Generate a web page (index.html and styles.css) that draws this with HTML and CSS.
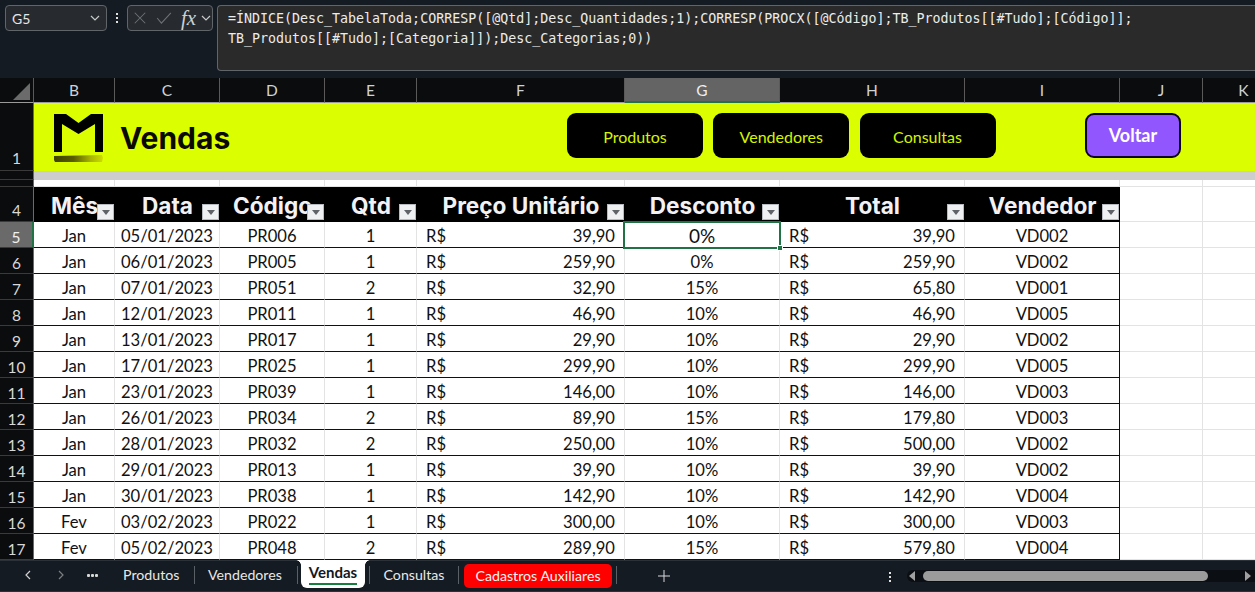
FILE: index.html
```html
<!DOCTYPE html>
<html lang="pt-BR">
<head>
<meta charset="utf-8">
<title>Vendas</title>
<link rel="stylesheet" href="styles.css">
</head>
<body>
<div class="app">
  <header class="fbar">
    <div class="namebox"><span>G5</span><svg class="chev" viewBox="0 0 10 6"><path d="M1 1l4 4 4-4"/></svg></div>
    <div class="vdots"><i></i><i></i><i></i></div>
    <div class="fxbox">
      <svg class="ic-x" viewBox="0 0 16 16"><path d="M2 2l12 12M14 2L2 14"/></svg>
      <svg class="ic-v" viewBox="0 0 18 14"><path d="M1 7l5 6L17 1"/></svg>
      <span class="fx">fx</span>
      <svg class="chev" viewBox="0 0 10 6"><path d="M1 1l4 4 4-4"/></svg>
    </div>
    <div class="formula">=ÍNDICE(Desc_TabelaToda;CORRESP([@Qtd];Desc_Quantidades;1);CORRESP(PROCX([@Código];TB_Produtos[[#Tudo];[Código]];<br>TB_Produtos[[#Tudo];[Categoria]]);Desc_Categorias;0))</div>
  </header>
  <div class="sheet">
    <table class="grid">
      <colgroup>
        <col class="c-h"><col class="c-b"><col class="c-c"><col class="c-d"><col class="c-e"><col class="c-f"><col class="c-g"><col class="c-h2"><col class="c-i"><col class="c-j"><col class="c-k">
      </colgroup>
      <thead>
        <tr class="r-head">
          <th class="corner"><svg viewBox="0 0 18 18"><path d="M18 0v18H0z"/></svg></th>
          <th>B</th><th>C</th><th>D</th><th>E</th><th>F</th><th class="active">G</th><th>H</th><th>I</th><th>J</th><th>K</th>
        </tr>
      </thead>
      <tbody>
        <tr class="r-banner">
          <th class="rn">1</th>
          <td colspan="10" class="banner">
            <div class="banner-in">
              <svg class="logo" viewBox="0 0 50 48">
                <defs><linearGradient id="brush" x1="0" x2="1" y1="0" y2="0"><stop offset="0" stop-color="#3f4200"/><stop offset=".4" stop-color="#5a5e00"/><stop offset=".75" stop-color="#a8b500"/><stop offset="1" stop-color="#cfdf00"/></linearGradient></defs>
                <path d="M0 0h12l12.500 9L37 0h12v38h-8V10L24.500 20 8 10v28H0z"/>
                <path d="M0 42l48-1 1 3-1 4-47 0-1-2z" fill="url(#brush)"/>
              </svg>
              <h1 class="title">Vendas</h1>
              <div class="navs">
                <a class="nav">Produtos</a><a class="nav">Vendedores</a><a class="nav">Consultas</a>
              </div>
              <a class="back">Voltar</a>
            </div>
          </td>
        </tr>
        <tr class="r-2"><th class="rn"></th><td colspan="10" class="greyband"></td></tr>
        <tr class="r-3"><th class="rn"></th><td></td><td></td><td></td><td></td><td></td><td></td><td></td><td></td><td></td><td></td></tr>
        <tr class="r-4">
          <th class="rn">4</th>
          <td class="hd hd-b"><span>Mês</span><b class="flt"></b></td>
          <td class="hd hd-c"><span>Data</span><b class="flt"></b></td>
          <td class="hd hd-d"><span>Código</span><b class="flt"></b></td>
          <td class="hd hd-e"><span>Qtd</span><b class="flt"></b></td>
          <td class="hd hd-f"><span>Preço Unitário</span><b class="flt"></b></td>
          <td class="hd hd-g"><span>Desconto</span><b class="flt"></b></td>
          <td class="hd hd-h"><span>Total</span><b class="flt"></b></td>
          <td class="hd hd-i"><span>Vendedor</span><b class="flt"></b></td>
          <td></td><td></td>
        </tr>
        <tr class="sel"><th class="rn">5</th><td>Jan</td><td>05/01/2023</td><td>PR006</td><td>1</td><td class="cur"><span>R$</span><span>39,90</span></td><td class="pick"><span>0%</span><i class="handle"></i></td><td class="cur"><span>R$</span><span>39,90</span></td><td class="last">VD002</td><td></td><td></td></tr>
        <tr><th class="rn">6</th><td>Jan</td><td>06/01/2023</td><td>PR005</td><td>1</td><td class="cur"><span>R$</span><span>259,90</span></td><td>0%</td><td class="cur"><span>R$</span><span>259,90</span></td><td class="last">VD002</td><td></td><td></td></tr>
        <tr><th class="rn">7</th><td>Jan</td><td>07/01/2023</td><td>PR051</td><td>2</td><td class="cur"><span>R$</span><span>32,90</span></td><td>15%</td><td class="cur"><span>R$</span><span>65,80</span></td><td class="last">VD001</td><td></td><td></td></tr>
        <tr><th class="rn">8</th><td>Jan</td><td>12/01/2023</td><td>PR011</td><td>1</td><td class="cur"><span>R$</span><span>46,90</span></td><td>10%</td><td class="cur"><span>R$</span><span>46,90</span></td><td class="last">VD005</td><td></td><td></td></tr>
        <tr><th class="rn">9</th><td>Jan</td><td>13/01/2023</td><td>PR017</td><td>1</td><td class="cur"><span>R$</span><span>29,90</span></td><td>10%</td><td class="cur"><span>R$</span><span>29,90</span></td><td class="last">VD002</td><td></td><td></td></tr>
        <tr><th class="rn">10</th><td>Jan</td><td>17/01/2023</td><td>PR025</td><td>1</td><td class="cur"><span>R$</span><span>299,90</span></td><td>10%</td><td class="cur"><span>R$</span><span>299,90</span></td><td class="last">VD005</td><td></td><td></td></tr>
        <tr><th class="rn">11</th><td>Jan</td><td>23/01/2023</td><td>PR039</td><td>1</td><td class="cur"><span>R$</span><span>146,00</span></td><td>10%</td><td class="cur"><span>R$</span><span>146,00</span></td><td class="last">VD003</td><td></td><td></td></tr>
        <tr><th class="rn">12</th><td>Jan</td><td>26/01/2023</td><td>PR034</td><td>2</td><td class="cur"><span>R$</span><span>89,90</span></td><td>15%</td><td class="cur"><span>R$</span><span>179,80</span></td><td class="last">VD003</td><td></td><td></td></tr>
        <tr><th class="rn">13</th><td>Jan</td><td>28/01/2023</td><td>PR032</td><td>2</td><td class="cur"><span>R$</span><span>250,00</span></td><td>10%</td><td class="cur"><span>R$</span><span>500,00</span></td><td class="last">VD002</td><td></td><td></td></tr>
        <tr><th class="rn">14</th><td>Jan</td><td>29/01/2023</td><td>PR013</td><td>1</td><td class="cur"><span>R$</span><span>39,90</span></td><td>10%</td><td class="cur"><span>R$</span><span>39,90</span></td><td class="last">VD002</td><td></td><td></td></tr>
        <tr><th class="rn">15</th><td>Jan</td><td>30/01/2023</td><td>PR038</td><td>1</td><td class="cur"><span>R$</span><span>142,90</span></td><td>10%</td><td class="cur"><span>R$</span><span>142,90</span></td><td class="last">VD004</td><td></td><td></td></tr>
        <tr><th class="rn">16</th><td>Fev</td><td>03/02/2023</td><td>PR022</td><td>1</td><td class="cur"><span>R$</span><span>300,00</span></td><td>10%</td><td class="cur"><span>R$</span><span>300,00</span></td><td class="last">VD003</td><td></td><td></td></tr>
        <tr><th class="rn">17</th><td>Fev</td><td>05/02/2023</td><td>PR048</td><td>2</td><td class="cur"><span>R$</span><span>289,90</span></td><td>15%</td><td class="cur"><span>R$</span><span>579,80</span></td><td class="last">VD004</td><td></td><td></td></tr>
      </tbody>
    </table>
  </div>
  <footer class="tabs">
    <svg class="nav-ic" viewBox="0 0 6 10"><path d="M5 1L1 5l4 4"/></svg>
    <svg class="nav-ic dim" viewBox="0 0 6 10"><path d="M1 1l4 4-4 4"/></svg>
    <span class="more"><i></i><i></i><i></i></span>
    <span class="tab t-prod">Produtos</span><i class="sep"></i>
    <span class="tab t-vend">Vendedores</span><i class="sep"></i>
    <span class="tab active-tab"><span>Vendas</span></span><i class="sep sep-a"></i>
    <span class="tab t-cons">Consultas</span><i class="sep"></i>
    <span class="tab red-tab">Cadastros Auxiliares</span><i class="sep sep-a"></i>
    <svg class="plus" viewBox="0 0 12 12"><path d="M6 0v12M0 6h12"/></svg>
    <div class="vdots tabdots"><i></i><i></i><i></i></div>
    <div class="scroll">
      <b class="tri tri-l"></b>
      <div class="thumb"></div>
      <b class="tri tri-r"></b>
    </div>
  </footer>
</div>
</body>
</html>
```
FILE: styles.css
```css
* { box-sizing: border-box; }
html, body { margin: 0; padding: 0; }
body { width: 1255px; height: 592px; overflow: hidden; background: #141b22; font-family: Lato, "Noto Sans", sans-serif; }
.app { width: 1255px; height: 592px; display: flex; flex-direction: column; }

/* formula bar */
.fbar { height: 78px; flex: none; background: #141b22; display: flex; align-items: flex-start; padding: 5px 0 0 5px; }
.namebox { width: 102px; height: 26px; border: 1px solid #60656a; border-radius: 4px; background: #272b2f; color: #e6e6e6; display: flex; align-items: center; justify-content: space-between; padding: 0 6px; font-size: 14px; }
.chev { width: 10px; height: 6px; flex: none; fill: none; stroke: #c8c8c8; stroke-width: 1.2; }
.vdots { width: 20px; height: 26px; display: flex; flex-direction: column; align-items: center; justify-content: center; gap: 2px; }
.vdots i { width: 2px; height: 2px; background: #e0e0e0; display: block; }
.fxbox { width: 86px; height: 26px; border: 1px solid #60656a; border-radius: 4px; background: #272b2f; display: flex; align-items: center; padding-left: 5px; }
.ic-x { width: 14px; height: 14px; flex: none; fill: none; stroke: #6e7276; stroke-width: 1.2; }
.ic-v { width: 16px; height: 12px; flex: none; margin-left: 9px; fill: none; stroke: #6e7276; stroke-width: 1.2; }
.fx { font-family: "Liberation Serif", serif; font-style: italic; font-weight: 400; font-size: 21px; color: #cfcfcf; margin-left: 9px; width: 16px; margin-right: 4px; line-height: 1; }
.formula { margin-left: 4px; flex: 1; height: 66px; border: 1px solid #60656a; border-right: 0; border-radius: 4px 0 0 4px; background: #2a2a2a; color: #ececec; font-family: "DejaVu Sans Mono", "Liberation Mono", monospace; font-size: 13.3px; line-height: 20px; padding: 3px 0 0 10px; white-space: nowrap; overflow: hidden; }

/* sheet */
.sheet { height: 482px; flex: none; overflow: hidden; background: #fff; }
.grid { table-layout: fixed; border-collapse: separate; border-spacing: 0; width: 1285px; color: #111; }
.c-h { width: 34px; } .c-b { width: 81px; } .c-c { width: 105px; } .c-d { width: 105px; } .c-e { width: 92px; } .c-f { width: 208px; } .c-g { width: 155px; } .c-h2 { width: 185px; } .c-i { width: 155px; } .c-j { width: 83px; } .c-k { width: 82px; }
.grid td, .grid th { padding: 0; overflow: hidden; }
.grid tbody td { height: 26px; padding-top: 4px; font-size: 16.6px; text-align: center; background: #fff; border-right: 1px solid #e3e3e3; border-bottom: 1px solid #111; line-height: 1; }
.grid tbody td:nth-child(n+10) { border-bottom-color: #e3e3e3; }
.grid tbody td.last { border-right-color: #111; }
.r-head th { height: 25px; background: #0b0c0d; color: #cfd3d6; font-weight: 400; font-size: 15.5px; border-right: 1px solid #5a5a5a; border-bottom: 1px solid #9a9a9a; }
.r-head th.active { background: #646464; color: #eee; border-bottom: 2px solid #217346; }
.corner svg { display: block; width: 17px; height: 17px; margin: 3px 3px 0 auto; fill: #6b6b6b; }
.grid .rn { background: #0b0c0d; color: #d8d8d8; font-weight: 400; font-size: 15.5px; border-right: 1px solid #6a6a6a; border-bottom: 1px solid #3a3a3a; vertical-align: bottom; padding-bottom: 1px; }
.grid .r-4 .rn { padding-bottom: 2px; }
.grid .r-banner .rn { padding-bottom: 3px; }
.grid .sel .rn { background: #6a6a6a; color: #f0f0f0; border-right: 2px solid #217346; }

.r-banner { height: 68px; }
.grid tbody td.banner { height: 68px; padding: 0; background: #dcff00; border: 0; text-align: left; }
.banner-in { height: 68px; display: flex; align-items: flex-start; padding: 10px 0 0 20px; }
.logo { width: 50px; height: 48px; flex: none; margin-top: 1px; }
.title { margin: 6px 0 0 16px; width: 447px; flex: none; font-family: Inter, sans-serif; font-weight: 700; font-size: 30px; line-height: 38px; height: 38px; color: #0a0a00; }
.navs { display: flex; gap: 10.25px; }
.nav { width: 136px; height: 45px; padding-top: 2px; background: #000; border-radius: 9px; color: #d6f400; font-size: 16px; display: flex; align-items: center; justify-content: center; }
.back { width: 96px; height: 45px; margin-left: 89.500px; background: #9256ff; border: 2px solid #0b0318; border-radius: 9px; color: #fff; font-weight: 700; font-size: 18px; display: flex; align-items: center; justify-content: center; padding-bottom: 2px; }

.r-2 .rn { height: 9px; }
.grid tbody td.greyband { height: 9px; padding: 0; background: #cdcdcd; border: 0; }
.grid tbody .r-3 td { height: 7px; padding: 0; border-bottom: 1px solid #e3e3e3; }
.grid tbody .r-3 .rn { height: 7px; }

.grid tbody .r-4 td { height: 35px; padding: 0; border-bottom: 1px solid #e3e3e3; }
.grid tbody .r-4 td.hd { background: #000; border: 0; color: #f2f2f6; font-family: Inter, sans-serif; font-weight: 700; font-size: 22.6px; position: relative; text-align: center; white-space: nowrap; vertical-align: top; padding-top: 6px; line-height: 25px; overflow: visible; }
.flt { position: absolute; right: 1px; bottom: 2px; width: 17px; height: 16px; background: #eef0f2; border: 1px solid #b8bcc0; }
.flt::after { content: ""; position: absolute; left: 4px; top: 5px; border-left: 4px solid transparent; border-right: 4px solid transparent; border-top: 5px solid #5f6367; }

.grid tbody td.cur { padding: 4px 9px 0 9px; }
td.cur span { float: left; }
td.cur span + span { float: right; }

.grid tbody td.pick { position: relative; overflow: visible; padding-top: 1px; font-size: 19px; }
.pick::before { content: ""; position: absolute; left: -2px; right: -2px; top: -1px; bottom: -2px; border: 2px solid #217346; z-index: 1; }
.handle { position: absolute; right: -4px; bottom: -4px; width: 6px; height: 6px; background: #217346; border: 1px solid #fff; z-index: 2; }

/* tabs */
.tabs { height: 32px; flex: none; background: #141b22; display: flex; align-items: flex-start; padding-left: 25px; color: #e8e8e8; font-size: 14.2px; border-top: 1px solid #2b3138; border-bottom: 1px solid #2b3138; }
.nav-ic { width: 6px; height: 10px; flex: none; margin-top: 9px; fill: none; stroke: #d0d0d0; stroke-width: 1.2; }
.nav-ic.dim { stroke: #7b7f83; margin-left: 27px; }
.more { margin-left: 23px; width: 36px; display: flex; gap: 1px; margin-top: 13px; flex: none; }
.more i { width: 3px; height: 3px; background: #d8d8d8; border-radius: 1px; }
.tab { line-height: 28px; height: 28px; white-space: nowrap; flex: none; }
.t-prod { width: 71px; }
.t-vend { width: 102px; padding-left: 13px; }
.sep { width: 1px; height: 18px; margin-top: 5px; background: #5b6066; flex: none; }
.sep-a { margin-left: 4px; }
.active-tab { margin: -1px 0 0 3px; width: 64px; height: 28px; background: #fff linear-gradient(#15803d, #15803d) no-repeat center 23px / 48px 2px; color: #14181c; font-weight: 700; border-radius: 0 0 6px 6px; text-align: center; position: relative; line-height: 24px; font-size: 15px; }
.active-tab::before, .active-tab::after { content: ""; position: absolute; top: 0; width: 5px; height: 5px; }
.active-tab::before { left: -5px; background: radial-gradient(circle at 0 100%, transparent 4.500px, #fff 5px); }
.active-tab::after { right: -5px; background: radial-gradient(circle at 100% 100%, transparent 4.500px, #fff 5px); }
.t-cons { width: 88px; text-align: center; }
.red-tab { margin: 3px 0 0 5px; width: 148px; height: 24px; line-height: 24px; background: #ff0000; color: #f4f4f4; border-radius: 5px; text-align: center; }
.plus { width: 12px; height: 12px; flex: none; margin-top: 9px; margin-left: 41px; fill: none; stroke: #d8d8d8; stroke-width: 1; }
.tabdots { height: 12px; margin-top: 10px; margin-left: 210px; width: 20px; flex: none; }
.scroll { flex: 1; height: 12px; margin-top: 9px; margin-left: 7px; background: #0b0e12; border-radius: 6px 0 0 6px; display: flex; align-items: center; }
.tri { width: 0; height: 0; border-top: 5px solid transparent; border-bottom: 5px solid transparent; }
.tri-l { border-right: 6px solid #a0a0a0; margin-left: 2px; }
.thumb { width: 285px; height: 10px; margin-left: 8px; background: #9b9b9b; border-radius: 5px; }
.tri-r { border-left: 6px solid #a0a0a0; margin-left: auto; margin-right: 4px; }
```
